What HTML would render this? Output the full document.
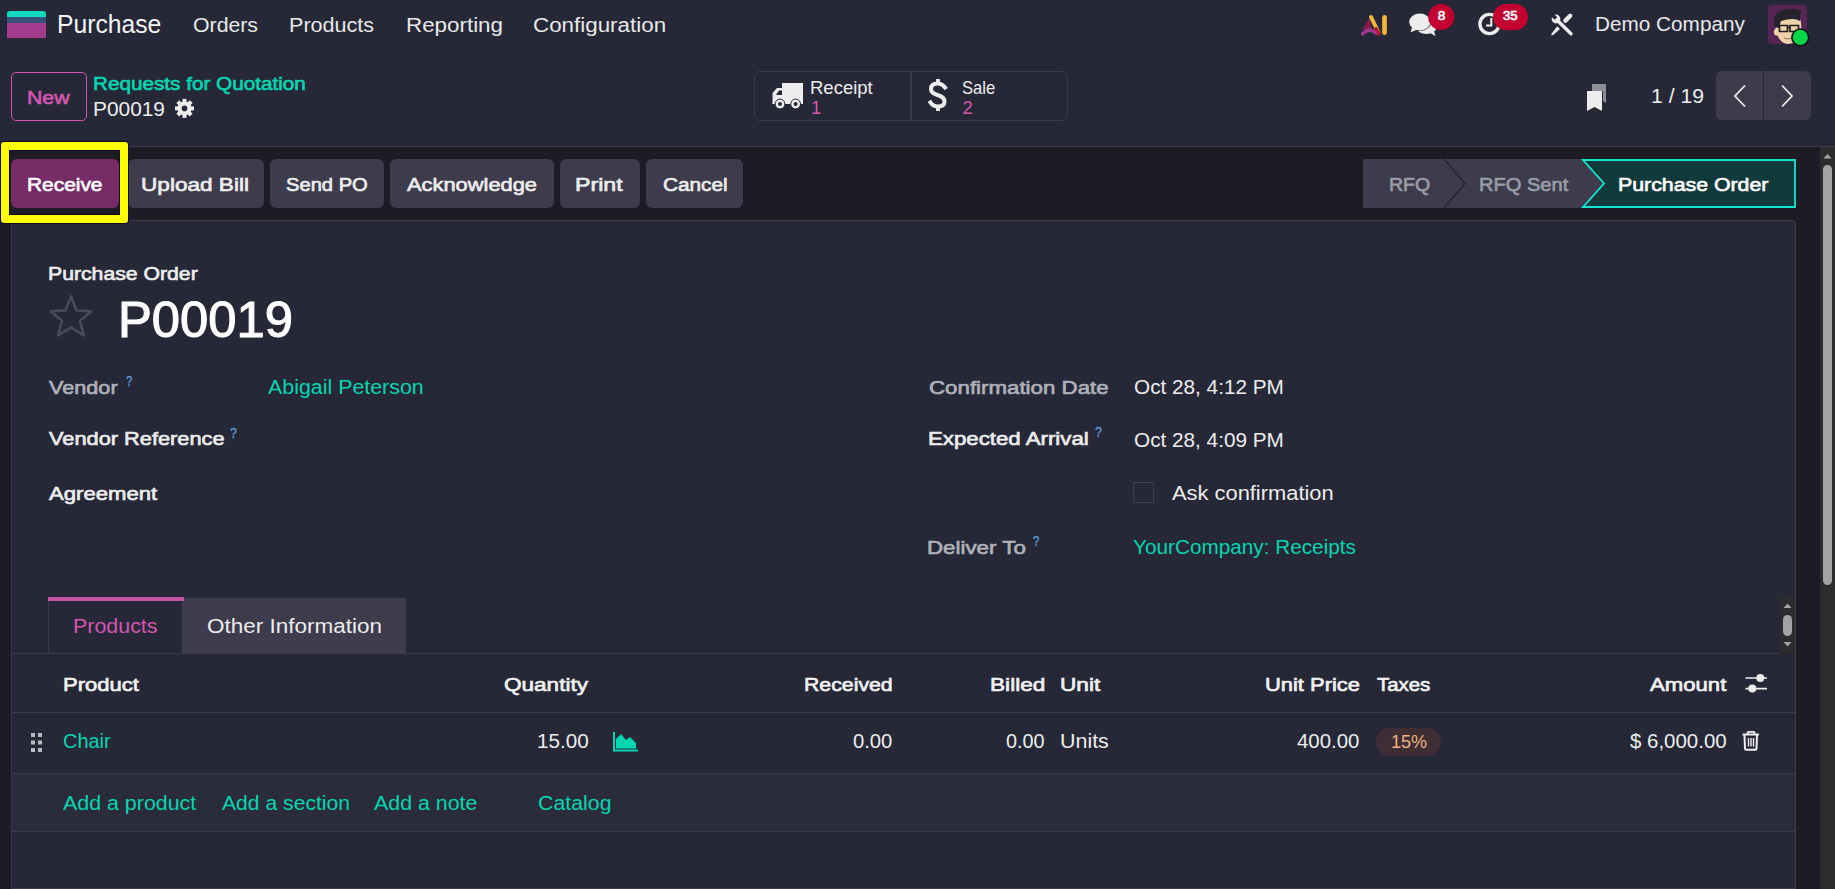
<!DOCTYPE html>
<html><head><meta charset="utf-8"><title>Purchase - P00019</title>
<style>
html,body{margin:0;padding:0;width:1835px;height:889px;overflow:hidden;background:#1D1C25;}
body{position:relative;font-family:'Liberation Sans', sans-serif;}
.b{position:absolute;}
.t{position:absolute;white-space:pre;line-height:1;font-family:'Liberation Sans', sans-serif;}
</style></head><body>
<div class="b" style="left:0px;top:0px;width:1835px;height:146px;background:#262838;"></div>
<div class="b" style="left:0px;top:146px;width:1835px;height:1px;background:#3C3A4C;"></div>
<div class="b" style="left:0px;top:147px;width:1820px;height:742px;background:#1D1C25;"></div>
<div class="b" style="left:11px;top:220px;width:1785px;height:669px;background:#262838;border:1px solid #3C3A4C;border-radius:4px 4px 0 0;box-sizing:border-box"></div>
<div class="b" style="left:1820px;top:147px;width:15px;height:742px;background:#2C2C2C;"></div>
<div class="b" style="left:1823px;top:165px;width:9px;height:420px;background:#A3A3A3;border-radius:5px"></div>
<svg class="b" style="left:1820px;top:150px" width="15" height="12"><path d="M3.5 8.5 L7.5 4 L11.5 8.5Z" fill="#A3A3A3"/></svg>
<div class="b" style="left:11px;top:72px;width:76px;height:49px;background:transparent;border:1.5px solid #D456B0;border-radius:5px;box-sizing:border-box"></div>
<div class="b" style="left:754px;top:71px;width:314px;height:50px;background:transparent;border:1px solid #3C3A4C;border-radius:6px;box-sizing:border-box"></div>
<div class="b" style="left:910px;top:72px;width:2px;height:48px;background:#3C3A4C;"></div>
<div class="b" style="left:1716px;top:71px;width:95px;height:49px;background:#3D3B4C;border-radius:6px"></div>
<div class="b" style="left:1763px;top:71px;width:1px;height:49px;background:#262838;"></div>
<div class="b" style="left:11px;top:159px;width:108px;height:49px;background:#762C67;border-radius:6px"></div>
<div class="b" style="left:128px;top:159px;width:136px;height:49px;background:#3D3B4C;border-radius:6px"></div>
<div class="b" style="left:270px;top:159px;width:114px;height:49px;background:#3D3B4C;border-radius:6px"></div>
<div class="b" style="left:390px;top:159px;width:164px;height:49px;background:#3D3B4C;border-radius:6px"></div>
<div class="b" style="left:560px;top:159px;width:80px;height:49px;background:#3D3B4C;border-radius:6px"></div>
<div class="b" style="left:646px;top:159px;width:97px;height:49px;background:#3D3B4C;border-radius:6px"></div>
<div class="b" style="left:1px;top:142px;width:127px;height:81px;background:transparent;border:8px solid #FFFF00;border-radius:3px;box-sizing:border-box;box-shadow:0 0 0 1px #0c0c2c, inset 0 0 0 1px #0c0c2c"></div>
<svg class="b" style="left:1360px;top:156px" width="440" height="56">
<path d="M3 3 H84 L105 27.5 L84 52 H3 Q3 52 3 52 V3Z" fill="#3D3B4C" transform="translate(0,0)"/>
<path d="M3 6 Q3 3 6 3 H84 L105 27.5 L84 52 H6 Q3 52 3 49 Z" fill="#3D3B4C"/>
<path d="M84 3 H224 L245 27.5 L224 52 H84 L105 27.5 Z" fill="#3D3B4C"/>
<path d="M84 3 L105 27.5 L84 52" stroke="#26242f" stroke-width="1.5" fill="none"/>
<path d="M223 4 H435 V51 H223 L244 27.5 Z" fill="#113A3C" stroke="#12E6CF" stroke-width="1.8"/>
</svg>
<div class="b" style="left:12px;top:653px;width:1768px;height:1px;background:#3C3A4C;"></div>
<div class="b" style="left:182px;top:598px;width:224px;height:55px;background:#3D3B4C;"></div>
<div class="b" style="left:48px;top:597px;width:136px;height:4px;background:#C8529F;"></div>
<div class="b" style="left:48px;top:601px;width:1px;height:52px;background:#3C3A4C;"></div>
<div class="b" style="left:1780px;top:597px;width:15px;height:57px;background:#2C2C2C;"></div>
<div class="b" style="left:1783px;top:615px;width:9px;height:21px;background:#A3A3A3;border-radius:5px"></div>
<svg class="b" style="left:1780px;top:600px" width="15" height="52"><path d="M3.5 8 L7.5 3.5 L11.5 8Z M3.5 42 L7.5 46.5 L11.5 42Z" fill="#A3A3A3"/></svg>
<div class="b" style="left:12px;top:774px;width:1783px;height:57px;background:#2A2C3B;"></div>
<div class="b" style="left:12px;top:712px;width:1783px;height:1px;background:#3C3A4C;"></div>
<div class="b" style="left:12px;top:773px;width:1783px;height:1px;background:#3C3A4C;"></div>
<div class="b" style="left:12px;top:831px;width:1783px;height:1px;background:#3C3A4C;"></div>
<div class="b" style="left:12px;top:888px;width:1783px;height:1px;background:#3C3A4C;"></div>
<div class="b" style="left:1376px;top:728px;width:65px;height:28px;background:#3F2D36;border-radius:14px"></div>
<div class="b" style="left:1133px;top:482px;width:21px;height:21px;background:transparent;border:1px solid #403D50;box-sizing:border-box"></div>

<!-- logo -->
<svg class="b" style="left:6px;top:10px" width="42" height="30">
<path d="M1 4 Q1 1 4 1 H37 Q40 1 40 4 V7 H1Z" fill="#10D9BD"/>
<rect x="1" y="7" width="39" height="6" fill="#35507a"/>
<rect x="1" y="13" width="39" height="15" fill="#A23B8C"/>
</svg>
<!-- gear -->
<svg class="b" style="left:174px;top:98px" width="22" height="22" viewBox="0 0 22 22">
<g transform="translate(10.5,10.4)" fill="#EDEDED">
<circle r="7"/>
<g id="teeth"><rect x="-2" y="-9.5" width="4" height="4"/><rect x="-2" y="5.5" width="4" height="4"/><rect x="-9.5" y="-2" width="4" height="4"/><rect x="5.5" y="-2" width="4" height="4"/></g>
<g transform="rotate(45)"><rect x="-2" y="-9.5" width="4" height="4"/><rect x="-2" y="5.5" width="4" height="4"/><rect x="-9.5" y="-2" width="4" height="4"/><rect x="5.5" y="-2" width="4" height="4"/></g>
<circle r="2.8" fill="#262838"/>
</g></svg>
<!-- truck -->
<svg class="b" style="left:770px;top:80px" width="36" height="32" viewBox="0 0 36 32">
<path d="M12 3 H33 V24 H12Z M12 8 H7 L2.5 13 V23 L2 24 H12Z" fill="#EDEDED"/>
<path d="M6 15 L9 10.5 H12 V15Z" fill="#262838"/>
<circle cx="10" cy="24" r="4.9" fill="#EDEDED" stroke="#262838" stroke-width="1"/><circle cx="10" cy="24" r="2" fill="#262838"/>
<circle cx="25.6" cy="24" r="4.9" fill="#EDEDED" stroke="#262838" stroke-width="1"/><circle cx="25.6" cy="24" r="2" fill="#262838"/>
</svg>
<!-- dollar -->
<svg class="b" style="left:926px;top:77px" width="24" height="36" viewBox="0 0 24 36">
<path d="M12 2 V7 M12 29 V34" stroke="#EDEDED" stroke-width="3.8"/>
<path d="M19 10.5 Q16 6.5 11.5 6.5 Q5 6.5 5 12 Q5 16 11.5 18 Q18.5 20 18.5 24.5 Q18.5 29.5 12 29.5 Q7 29.5 4.5 25.5" stroke="#EDEDED" stroke-width="4" fill="none" stroke-linecap="square"/>
</svg>
<!-- bookmark -->
<svg class="b" style="left:1584px;top:82px" width="26" height="32" viewBox="0 0 26 32">
<path d="M8 2 H22 V21 L19 19 V9 H8Z" fill="#8E8E96"/>
<path d="M3 9 H18 V29 L10.5 25 L3 29Z" fill="#EDEDED"/>
</svg>
<!-- pager chevrons -->
<svg class="b" style="left:1728px;top:82px" width="24" height="28"><path d="M17 3.5 L7 14 L17 24.5" stroke="#EDEDED" stroke-width="1.8" fill="none"/></svg>
<svg class="b" style="left:1776px;top:82px" width="24" height="28"><path d="M6 3.5 L16 14 L6 24.5" stroke="#EDEDED" stroke-width="1.8" fill="none"/></svg>
<!-- AI -->
<svg class="b" style="left:1358px;top:12px" width="32" height="26" viewBox="0 0 32 26">
<path d="M11.5 5.8 L4.2 18 L13.5 16.5Z" fill="#8A1A48"/>
<path d="M4.6 21.8 Q11.5 14.8 18.5 21.2" stroke="#A23B8E" stroke-width="3.4" fill="none" stroke-linecap="round"/>
<path d="M13 5 L20.5 20.5" stroke="#F6B935" stroke-width="4" stroke-linecap="round"/>
<path d="M18 17 L21 21.6" stroke="#A8183F" stroke-width="3.8" stroke-linecap="round"/>
<path d="M26.5 5.3 V20.7" stroke="#F6B935" stroke-width="4.6" stroke-linecap="round"/>
</svg>
<!-- chat -->
<svg class="b" style="left:1406px;top:10px" width="34" height="30" viewBox="0 0 34 30">
<ellipse cx="20.5" cy="17.8" rx="9.8" ry="6.2" fill="#EDEDED"/>
<path d="M23 22 L29.5 26.2 L27.5 19.5Z" fill="#EDEDED"/>
<ellipse cx="13.8" cy="12" rx="11.2" ry="9" fill="#262838"/>
<ellipse cx="13.8" cy="12" rx="10.6" ry="8.4" fill="#EDEDED"/>
<path d="M6 17.5 L4.6 22.3 L11 19.8Z" fill="#EDEDED"/>
</svg>
<!-- badge 8 -->
<svg class="b" style="left:1427px;top:3px" width="28" height="28"><circle cx="14.2" cy="14" r="13" fill="#C3002F"/></svg>
<!-- clock -->
<svg class="b" style="left:1474px;top:9px" width="32" height="32" viewBox="0 0 32 32">
<circle cx="15.5" cy="15" r="9.6" stroke="#EDEDED" stroke-width="3.4" fill="none"/>
<path d="M17.3 9 V16.5 H12" stroke="#EDEDED" stroke-width="2" fill="none"/>
</svg>
<!-- badge 35 -->
<div class="b" style="left:1493px;top:4px;width:35px;height:26px;background:#C3002F;border-radius:13px"></div>
<!-- tools -->
<svg class="b" style="left:1549px;top:12px" width="28" height="26" viewBox="0 0 28 26">
<path d="M8 8 L22 21.8" stroke="#EDEDED" stroke-width="3.4" stroke-linecap="round"/>
<circle cx="7" cy="7" r="4.4" fill="#EDEDED"/>
<path d="M2 4.2 L4.6 1.6 L8.2 5.2 L5.6 7.8Z" fill="#262838"/>
<path d="M21.2 3.8 L16.4 8.6" stroke="#EDEDED" stroke-width="4.4" stroke-linecap="round"/>
<path d="M8.2 14.2 L11 17 L4.5 22.8 L2.2 23.6 L2.9 21.2Z" fill="#EDEDED"/>
</svg>
<!-- avatar -->
<svg class="b" style="left:1767px;top:4px" width="44" height="44" viewBox="0 0 44 44">
<rect x="1" y="1" width="39" height="39" rx="4" fill="#562556"/>
<path d="M9 28 Q8 19 11 15 L33 14 Q35 20 34 29 Q31 40 21 40 Q13 40 9 28Z" fill="#EFD3AB"/>
<ellipse cx="9.5" cy="28" rx="2.6" ry="3.5" fill="#EFD3AB"/>
<path d="M7 22 Q5 9 16 6 Q27 3 34.5 7 L33 11 Q34 15 33 17 Q27 13 14 17 L12 24 Q9 24 7 22Z" fill="#24242C"/>
<path d="M12.5 21.5 H20.5 V27.5 H12.5Z M23 21.5 H31.5 V27.5 H23Z M20.5 23.5 H23" fill="none" stroke="#1E1E22" stroke-width="1.7"/>
<path d="M17 34 Q21 36 25 34" stroke="#9a6a5a" stroke-width="1" fill="none"/>
<circle cx="33.3" cy="33.4" r="9.2" fill="#111"/>
<circle cx="33.3" cy="33.4" r="7.6" fill="#00D449"/>
</svg>
<!-- star -->
<svg class="b" style="left:46px;top:293px" width="50" height="48" viewBox="0 0 50 48">
<path d="M25 3.5 L30.6 17.5 L45.5 18.2 L34 27.8 L37.8 42.5 L25 34.3 L12.2 42.5 L16 27.8 L4.5 18.2 L19.4 17.5Z" fill="none" stroke="#4A4A5A" stroke-width="2.6" stroke-linejoin="round"/>
</svg>
<!-- drag handle -->
<svg class="b" style="left:30px;top:732px" width="15" height="22">
<g fill="#B9B9C0"><rect x="1" y="1" width="4" height="4"/><rect x="8" y="1" width="4" height="4"/><rect x="1" y="8.5" width="4" height="4"/><rect x="8" y="8.5" width="4" height="4"/><rect x="1" y="16" width="4" height="4"/><rect x="8" y="16" width="4" height="4"/></g>
</svg>
<!-- area chart -->
<svg class="b" style="left:612px;top:730px" width="28" height="24" viewBox="0 0 28 24">
<path d="M2 2 V20.5 H26" stroke="#04D6B1" stroke-width="2" fill="none"/>
<path d="M4 18.5 V9 L9 4 L14 10 L18 7 L24 13 V18.5Z" fill="#04D6B1"/>
</svg>
<!-- sliders -->
<svg class="b" style="left:1744px;top:672px" width="26" height="22" viewBox="0 0 26 22">
<path d="M1.5 6 H23 M1.5 16.6 H23" stroke="#EDEDED" stroke-width="1.6"/>
<circle cx="16.3" cy="6" r="4" fill="#EDEDED"/><circle cx="8.3" cy="16.6" r="4" fill="#EDEDED"/>
</svg>
<!-- trash -->
<svg class="b" style="left:1740px;top:730px" width="22" height="22" viewBox="0 0 22 22">
<path d="M2.5 4.5 H19" stroke="#EDEDED" stroke-width="2"/>
<path d="M7.5 4.5 V2.5 Q7.5 1.8 8.2 1.8 H13.8 Q14.5 1.8 14.5 2.5 V4.5" stroke="#EDEDED" stroke-width="1.8" fill="none"/>
<path d="M4.5 5 L5 18.5 Q5 19.8 6.3 19.8 H15.2 Q16.5 19.8 16.5 18.5 L17 5" stroke="#EDEDED" stroke-width="2" fill="none"/>
<path d="M8.5 8 V16.5 M11 8 V16.5 M13.5 8 V16.5" stroke="#EDEDED" stroke-width="1.4"/>
</svg>

<span class="t" style="left:57.10px;top:11.40px;font-size:26px;font-weight:400;color:#F5F5F5;transform:scaleX(0.9499);transform-origin:0 0;">Purchase</span>
<span class="t" style="left:193.00px;top:15.00px;font-size:20px;font-weight:400;color:#E8E8E8;transform:scaleX(1.0634);transform-origin:0 0;">Orders</span>
<span class="t" style="left:289.32px;top:15.00px;font-size:20px;font-weight:400;color:#E8E8E8;transform:scaleX(1.0779);transform-origin:0 0;">Products</span>
<span class="t" style="left:405.88px;top:15.00px;font-size:20px;font-weight:400;color:#E8E8E8;transform:scaleX(1.1183);transform-origin:0 0;">Reporting</span>
<span class="t" style="left:533.38px;top:15.00px;font-size:20px;font-weight:400;color:#E8E8E8;transform:scaleX(1.1186);transform-origin:0 0;">Configuration</span>
<span class="t" style="left:1594.54px;top:15.43px;font-size:19.5px;font-weight:400;color:#E8E8E8;transform:scaleX(1.0639);transform-origin:0 0;">Demo Company</span>
<span class="t" style="left:1437.70px;top:9.40px;font-size:13.65px;font-weight:400;color:#FFFFFF;letter-spacing:0.000px;-webkit-text-stroke:0.65px #FFFFFF;">8</span>
<span class="t" style="left:1502.73px;top:9.40px;font-size:13.65px;font-weight:400;color:#FFFFFF;transform:scaleX(0.9592);transform-origin:0 0;-webkit-text-stroke:0.65px #FFFFFF;">35</span>
<span class="t" style="left:27.21px;top:88.34px;font-size:19.01px;font-weight:400;color:#D456B0;transform:scaleX(1.1197);transform-origin:0 0;-webkit-text-stroke:0.65px #D456B0;">New</span>
<span class="t" style="left:92.84px;top:74.34px;font-size:19.01px;font-weight:400;color:#04D6B1;transform:scaleX(1.0894);transform-origin:0 0;-webkit-text-stroke:0.65px #04D6B1;">Requests for Quotation</span>
<span class="t" style="left:92.93px;top:99.92px;font-size:19.5px;font-weight:400;color:#EDEDED;transform:scaleX(1.0706);transform-origin:0 0;">P00019</span>
<span class="t" style="left:810.40px;top:78.78px;font-size:18.5px;font-weight:400;color:#EDEDED;transform:scaleX(1.0002);transform-origin:0 0;">Receipt</span>
<span class="t" style="left:811.00px;top:98.78px;font-size:18.5px;font-weight:400;color:#D456B0;letter-spacing:0.000px;">1</span>
<span class="t" style="left:962.00px;top:78.78px;font-size:18.5px;font-weight:400;color:#EDEDED;transform:scaleX(0.8982);transform-origin:0 0;">Sale</span>
<span class="t" style="left:962.40px;top:98.78px;font-size:18.5px;font-weight:400;color:#D456B0;letter-spacing:0.000px;">2</span>
<span class="t" style="left:1650.91px;top:86.92px;font-size:19.5px;font-weight:400;color:#EDEDED;transform:scaleX(1.0864);transform-origin:0 0;">1 / 19</span>
<span class="t" style="left:27.23px;top:175.34px;font-size:19.01px;font-weight:400;color:#FFFFFF;transform:scaleX(1.0995);transform-origin:0 0;-webkit-text-stroke:0.65px #FFFFFF;">Receive</span>
<span class="t" style="left:140.74px;top:175.34px;font-size:19.01px;font-weight:400;color:#EDEDED;transform:scaleX(1.1890);transform-origin:0 0;-webkit-text-stroke:0.65px #EDEDED;">Upload Bill</span>
<span class="t" style="left:286.32px;top:175.34px;font-size:19.01px;font-weight:400;color:#EDEDED;transform:scaleX(1.0606);transform-origin:0 0;-webkit-text-stroke:0.65px #EDEDED;">Send PO</span>
<span class="t" style="left:407.32px;top:175.34px;font-size:19.01px;font-weight:400;color:#EDEDED;transform:scaleX(1.1503);transform-origin:0 0;-webkit-text-stroke:0.65px #EDEDED;">Acknowledge</span>
<span class="t" style="left:575.10px;top:175.34px;font-size:19.01px;font-weight:400;color:#EDEDED;transform:scaleX(1.2207);transform-origin:0 0;-webkit-text-stroke:0.65px #EDEDED;">Print</span>
<span class="t" style="left:663.33px;top:175.34px;font-size:19.01px;font-weight:400;color:#EDEDED;transform:scaleX(1.0937);transform-origin:0 0;-webkit-text-stroke:0.65px #EDEDED;">Cancel</span>
<span class="t" style="left:1389.30px;top:175.34px;font-size:19.01px;font-weight:400;color:#9A9CA5;transform:scaleX(1.0267);transform-origin:0 0;-webkit-text-stroke:0.65px #9A9CA5;">RFQ</span>
<span class="t" style="left:1479.27px;top:175.34px;font-size:19.01px;font-weight:400;color:#9A9CA5;transform:scaleX(1.0565);transform-origin:0 0;-webkit-text-stroke:0.65px #9A9CA5;">RFQ Sent</span>
<span class="t" style="left:1618.20px;top:175.34px;font-size:19.01px;font-weight:400;color:#FFFFFF;transform:scaleX(1.1216);transform-origin:0 0;-webkit-text-stroke:0.65px #FFFFFF;">Purchase Order</span>
<span class="t" style="left:48.21px;top:264.34px;font-size:19.01px;font-weight:400;color:#EDEDED;transform:scaleX(1.1163);transform-origin:0 0;-webkit-text-stroke:0.65px #EDEDED;">Purchase Order</span>
<span class="t" style="left:117.94px;top:295.00px;font-size:50px;font-weight:400;color:#FFFFFF;transform:scaleX(1.0145);transform-origin:0 0;-webkit-text-stroke:1.1px #FFFFFF;">P00019</span>
<span class="t" style="left:48.73px;top:378.34px;font-size:19.01px;font-weight:400;color:#B0B1B9;transform:scaleX(1.1389);transform-origin:0 0;-webkit-text-stroke:0.65px #B0B1B9;">Vendor</span>
<span class="t" style="left:267.60px;top:377.93px;font-size:19.5px;font-weight:400;color:#04D6B1;transform:scaleX(1.0966);transform-origin:0 0;">Abigail Peterson</span>
<span class="t" style="left:48.73px;top:429.34px;font-size:19.01px;font-weight:400;color:#EDEDED;transform:scaleX(1.1465);transform-origin:0 0;-webkit-text-stroke:0.65px #EDEDED;">Vendor Reference</span>
<span class="t" style="left:48.73px;top:484.34px;font-size:19.01px;font-weight:400;color:#EDEDED;transform:scaleX(1.1632);transform-origin:0 0;-webkit-text-stroke:0.65px #EDEDED;">Agreement</span>
<span class="t" style="left:928.73px;top:378.34px;font-size:19.01px;font-weight:400;color:#B0B1B9;transform:scaleX(1.1730);transform-origin:0 0;-webkit-text-stroke:0.65px #B0B1B9;">Confirmation Date</span>
<span class="t" style="left:1133.50px;top:377.93px;font-size:19.5px;font-weight:400;color:#EDEDED;transform:scaleX(1.0633);transform-origin:0 0;">Oct 28, 4:12 PM</span>
<span class="t" style="left:927.55px;top:429.34px;font-size:19.01px;font-weight:400;color:#EDEDED;transform:scaleX(1.1707);transform-origin:0 0;-webkit-text-stroke:0.65px #EDEDED;">Expected Arrival</span>
<span class="t" style="left:1133.50px;top:430.93px;font-size:19.5px;font-weight:400;color:#EDEDED;transform:scaleX(1.0633);transform-origin:0 0;">Oct 28, 4:09 PM</span>
<span class="t" style="left:1172.30px;top:483.93px;font-size:19.5px;font-weight:400;color:#EDEDED;transform:scaleX(1.1215);transform-origin:0 0;">Ask confirmation</span>
<span class="t" style="left:927.15px;top:538.34px;font-size:19.01px;font-weight:400;color:#B0B1B9;transform:scaleX(1.1743);transform-origin:0 0;-webkit-text-stroke:0.65px #B0B1B9;">Deliver To</span>
<span class="t" style="left:1133.40px;top:537.92px;font-size:19.5px;font-weight:400;color:#04D6B1;transform:scaleX(1.0638);transform-origin:0 0;">YourCompany: Receipts</span>
<span class="t" style="left:72.70px;top:617.42px;font-size:19.5px;font-weight:400;color:#D456B0;transform:scaleX(1.0984);transform-origin:0 0;">Products</span>
<span class="t" style="left:207.40px;top:617.42px;font-size:19.5px;font-weight:400;color:#EDEDED;transform:scaleX(1.1525);transform-origin:0 0;">Other Information</span>
<span class="t" style="left:62.86px;top:675.34px;font-size:19.01px;font-weight:400;color:#F2F2F2;transform:scaleX(1.1603);transform-origin:0 0;-webkit-text-stroke:0.65px #F2F2F2;">Product</span>
<span class="t" style="left:504.32px;top:675.34px;font-size:19.01px;font-weight:400;color:#F2F2F2;transform:scaleX(1.1865);transform-origin:0 0;-webkit-text-stroke:0.65px #F2F2F2;">Quantity</span>
<span class="t" style="left:803.61px;top:675.34px;font-size:19.01px;font-weight:400;color:#F2F2F2;transform:scaleX(1.1199);transform-origin:0 0;-webkit-text-stroke:0.65px #F2F2F2;">Received</span>
<span class="t" style="left:989.63px;top:675.34px;font-size:19.01px;font-weight:400;color:#F2F2F2;transform:scaleX(1.1926);transform-origin:0 0;-webkit-text-stroke:0.65px #F2F2F2;">Billed</span>
<span class="t" style="left:1060.43px;top:675.34px;font-size:19.01px;font-weight:400;color:#F2F2F2;transform:scaleX(1.1922);transform-origin:0 0;-webkit-text-stroke:0.65px #F2F2F2;">Unit</span>
<span class="t" style="left:1265.37px;top:675.34px;font-size:19.01px;font-weight:400;color:#F2F2F2;transform:scaleX(1.1530);transform-origin:0 0;-webkit-text-stroke:0.65px #F2F2F2;">Unit Price</span>
<span class="t" style="left:1376.62px;top:675.34px;font-size:19.01px;font-weight:400;color:#F2F2F2;transform:scaleX(1.0736);transform-origin:0 0;-webkit-text-stroke:0.65px #F2F2F2;">Taxes</span>
<span class="t" style="left:1649.62px;top:675.34px;font-size:19.01px;font-weight:400;color:#F2F2F2;transform:scaleX(1.1654);transform-origin:0 0;-webkit-text-stroke:0.65px #F2F2F2;">Amount</span>
<span class="t" style="left:63.40px;top:732.42px;font-size:19.5px;font-weight:400;color:#04D6B1;transform:scaleX(1.0233);transform-origin:0 0;">Chair</span>
<span class="t" style="left:537.34px;top:732.42px;font-size:19.5px;font-weight:400;color:#EDEDED;transform:scaleX(1.0594);transform-origin:0 0;">15.00</span>
<span class="t" style="left:852.50px;top:732.42px;font-size:19.5px;font-weight:400;color:#EDEDED;transform:scaleX(1.0365);transform-origin:0 0;">0.00</span>
<span class="t" style="left:1006.00px;top:732.42px;font-size:19.5px;font-weight:400;color:#EDEDED;transform:scaleX(1.0155);transform-origin:0 0;">0.00</span>
<span class="t" style="left:1060.20px;top:732.42px;font-size:19.5px;font-weight:400;color:#EDEDED;transform:scaleX(1.0990);transform-origin:0 0;">Units</span>
<span class="t" style="left:1297.40px;top:732.42px;font-size:19.5px;font-weight:400;color:#EDEDED;transform:scaleX(1.0469);transform-origin:0 0;">400.00</span>
<span class="t" style="left:1390.67px;top:733.62px;font-size:17.5px;font-weight:400;color:#EDB07F;transform:scaleX(1.0309);transform-origin:0 0;">15%</span>
<span class="t" style="left:1630.00px;top:732.42px;font-size:19.5px;font-weight:400;color:#EDEDED;transform:scaleX(1.0485);transform-origin:0 0;">$ 6,000.00</span>
<span class="t" style="left:63.40px;top:793.92px;font-size:19.5px;font-weight:400;color:#04D6B1;transform:scaleX(1.0975);transform-origin:0 0;">Add a product</span>
<span class="t" style="left:221.60px;top:793.92px;font-size:19.5px;font-weight:400;color:#04D6B1;transform:scaleX(1.0834);transform-origin:0 0;">Add a section</span>
<span class="t" style="left:373.60px;top:793.92px;font-size:19.5px;font-weight:400;color:#04D6B1;transform:scaleX(1.0954);transform-origin:0 0;">Add a note</span>
<span class="t" style="left:538.40px;top:793.92px;font-size:19.5px;font-weight:400;color:#04D6B1;transform:scaleX(1.0939);transform-origin:0 0;">Catalog</span>
<span class="t" style="left:125.60px;top:373.35px;font-size:15px;font-weight:400;color:#5A95D8;transform:scaleX(0.7500);transform-origin:0 0;-webkit-text-stroke:0.4px #5A95D8;">?</span>
<span class="t" style="left:230.40px;top:424.75px;font-size:15px;font-weight:400;color:#5A95D8;transform:scaleX(0.8250);transform-origin:0 0;-webkit-text-stroke:0.4px #5A95D8;">?</span>
<span class="t" style="left:1095.00px;top:424.35px;font-size:15px;font-weight:400;color:#5A95D8;transform:scaleX(0.8250);transform-origin:0 0;-webkit-text-stroke:0.4px #5A95D8;">?</span>
<span class="t" style="left:1033.00px;top:532.75px;font-size:15px;font-weight:400;color:#5A95D8;transform:scaleX(0.7500);transform-origin:0 0;-webkit-text-stroke:0.4px #5A95D8;">?</span>
</body></html>
